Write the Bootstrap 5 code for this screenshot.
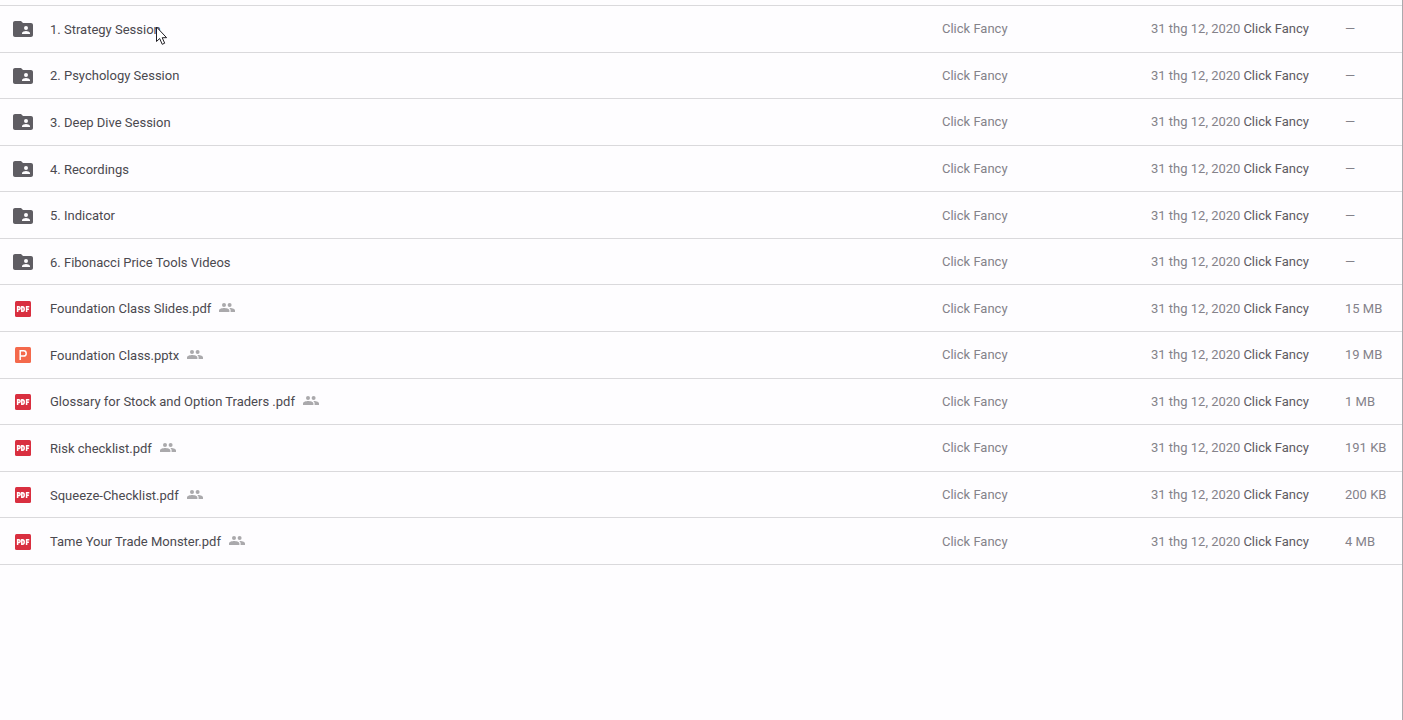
<!DOCTYPE html>
<html lang="vi">
<head>
<meta charset="utf-8">
<meta name="viewport" content="width=device-width, initial-scale=1">
<title>Drive</title>
<link href="https://cdn.jsdelivr.net/npm/bootstrap@5.3.0/dist/css/bootstrap.min.css" rel="stylesheet">
<style>
  body { font-family: Roboto, "Liberation Sans", sans-serif; font-size: 13px; line-height: 20px; background: #fefdff; }
  .drive-pane { border-right: 1px solid #aaa9ad; padding-top: 5px; }
  .file-table { table-layout: fixed; height: 560px; --bs-table-bg: transparent; border-top: 1px solid #dad9dc; border-color: #dad9dc; color: #84828a; }
  .file-table > tbody > tr > td { padding: 1px 0 0; color: inherit; white-space: nowrap; }
  .file-table > tbody > tr > td.file-name { color: #4b494f; font-weight: 450; padding-top: 2px; }
  .col-icon { width: 50px; }
  .col-owner { width: 209px; }
  .col-date { width: 194px; }
  .col-size { width: 57px; }
  .editor { color: #5d5b62; margin-left: 3px; }
  .type-icon { width: 24px; height: 24px; margin-left: 11px; display: block; }
  .shared-icon { width: 16px; height: 16px; margin: 0 0 3px 8px; color: #aaa9ac; }
  .cursor { left: 154px; top: 26px; width: 14px; height: 21px; pointer-events: none; }
</style>
</head>
<body>
<svg class="d-none" aria-hidden="true">
  <symbol id="folder" viewBox="0 0 24 24"><path fill="#5f5d63" d="M20 6h-8l-2-2H4c-1.100 0-2 .9-2 2v12c0 1.100.9 2 2 2h16c1.100 0 2-.9 2-2V8c0-1.100-.9-2-2-2z"/><path fill="#fefdff" d="M15 9a2 2 0 1 1 0 4 2 2 0 0 1 0-4zm4 8h-8v-1c0-1.330 2.670-2 4-2s4 .67 4 2z"/></symbol>
  <symbol id="pdf" viewBox="0 0 24 24"><rect x="4" y="4" width="16" height="16" rx="1.500" fill="#d92f40"/><path fill="none" stroke="#fff" stroke-width="1.500" d="M6.600 15V9.700h1.100a1.300 1.300 0 0 1 0 2.900H6.600M10.800 9.700v4.600h.7c2.300 0 2.300-4.600 0-4.600zM15.600 15V9.700h2.700M15.600 12.200h2.300"/></symbol>
  <symbol id="pptx" viewBox="0 0 24 24"><rect x="4" y="4" width="16" height="16" rx="1.500" fill="#f4694c"/><path fill="none" stroke="#fff" stroke-width="1.500" d="M9.200 17V7.800h3.400a2.600 2.600 0 0 1 0 5.200H9.200"/></symbol>
  <symbol id="people" viewBox="0 0 16 16"><g fill="currentColor"><circle cx="5" cy="5" r="2"/><circle cx="10.600" cy="5" r="2"/><path d="M0 12v-1.500C0 8.700 3.300 8 5.200 8s5.200.7 5.200 2.500V12zM11.600 12v-1.500c0-1-.5-1.800-1.400-2.400 2 .0 5.800.6 5.800 2.400V12z"/></g></symbol>
</svg>
<main class="drive-pane min-vh-100 position-relative">
<table class="table file-table align-middle mb-0">
<colgroup><col class="col-icon"><col><col class="col-owner"><col class="col-date"><col class="col-size"></colgroup>
<tbody>
<tr><td><svg class="type-icon"><use href="#folder"/></svg></td><td class="file-name">1. Strategy Session</td><td>Click Fancy</td><td>31 thg 12, 2020<span class="editor">Click Fancy</span></td><td>—</td></tr>
<tr><td><svg class="type-icon"><use href="#folder"/></svg></td><td class="file-name">2. Psychology Session</td><td>Click Fancy</td><td>31 thg 12, 2020<span class="editor">Click Fancy</span></td><td>—</td></tr>
<tr><td><svg class="type-icon"><use href="#folder"/></svg></td><td class="file-name">3. Deep Dive Session</td><td>Click Fancy</td><td>31 thg 12, 2020<span class="editor">Click Fancy</span></td><td>—</td></tr>
<tr><td><svg class="type-icon"><use href="#folder"/></svg></td><td class="file-name">4. Recordings</td><td>Click Fancy</td><td>31 thg 12, 2020<span class="editor">Click Fancy</span></td><td>—</td></tr>
<tr><td><svg class="type-icon"><use href="#folder"/></svg></td><td class="file-name">5. Indicator</td><td>Click Fancy</td><td>31 thg 12, 2020<span class="editor">Click Fancy</span></td><td>—</td></tr>
<tr><td><svg class="type-icon"><use href="#folder"/></svg></td><td class="file-name">6. Fibonacci Price Tools Videos</td><td>Click Fancy</td><td>31 thg 12, 2020<span class="editor">Click Fancy</span></td><td>—</td></tr>
<tr><td><svg class="type-icon"><use href="#pdf"/></svg></td><td class="file-name">Foundation Class Slides.pdf<svg class="shared-icon"><use href="#people"/></svg></td><td>Click Fancy</td><td>31 thg 12, 2020<span class="editor">Click Fancy</span></td><td>15 MB</td></tr>
<tr><td><svg class="type-icon"><use href="#pptx"/></svg></td><td class="file-name">Foundation Class.pptx<svg class="shared-icon"><use href="#people"/></svg></td><td>Click Fancy</td><td>31 thg 12, 2020<span class="editor">Click Fancy</span></td><td>19 MB</td></tr>
<tr><td><svg class="type-icon"><use href="#pdf"/></svg></td><td class="file-name">Glossary for Stock and Option Traders .pdf<svg class="shared-icon"><use href="#people"/></svg></td><td>Click Fancy</td><td>31 thg 12, 2020<span class="editor">Click Fancy</span></td><td>1 MB</td></tr>
<tr><td><svg class="type-icon"><use href="#pdf"/></svg></td><td class="file-name">Risk checklist.pdf<svg class="shared-icon"><use href="#people"/></svg></td><td>Click Fancy</td><td>31 thg 12, 2020<span class="editor">Click Fancy</span></td><td>191 KB</td></tr>
<tr><td><svg class="type-icon"><use href="#pdf"/></svg></td><td class="file-name">Squeeze-Checklist.pdf<svg class="shared-icon"><use href="#people"/></svg></td><td>Click Fancy</td><td>31 thg 12, 2020<span class="editor">Click Fancy</span></td><td>200 KB</td></tr>
<tr><td><svg class="type-icon"><use href="#pdf"/></svg></td><td class="file-name">Tame Your Trade Monster.pdf<svg class="shared-icon"><use href="#people"/></svg></td><td>Click Fancy</td><td>31 thg 12, 2020<span class="editor">Click Fancy</span></td><td>4 MB</td></tr>
</tbody>
</table>
<svg class="cursor position-absolute" viewBox="0 0 14 21" aria-hidden="true"><path d="M2.500 1v14.500l3.200-3 2.500 5.800 2.500-1.100-2.500-5.500h4.400z" fill="#fff" stroke="#222026" stroke-width="1"/></svg>
</main>
<script src="https://cdn.jsdelivr.net/npm/bootstrap@5.3.0/dist/js/bootstrap.bundle.min.js"></script>
</body>
</html>
